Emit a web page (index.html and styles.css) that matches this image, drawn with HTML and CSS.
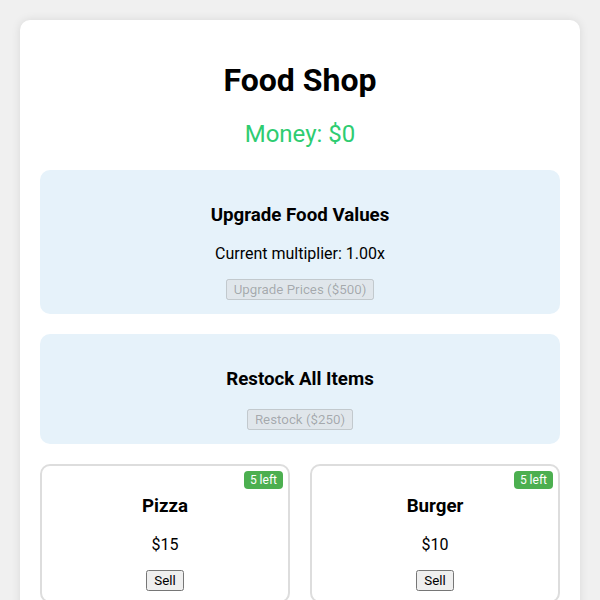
FILE: index.html
```html
<!DOCTYPE html>
<html lang="en">
<head>
  <meta charset="UTF-8">
  <meta name="viewport" content="width=device-width, initial-scale=1">
  <title>Food Shop</title>
  <link rel="stylesheet" href="styles.css">
</head>
<body>
  <div class="container">
    <h1>Food Shop</h1>
    <div class="money" id="money">Money: $0</div>

    <div class="panel">
      <h3>Upgrade Food Values</h3>
      <p>Current multiplier: <span id="multiplier">1.00</span>x</p>
      <button disabled>Upgrade Prices ($500)</button>
    </div>

    <div class="panel">
      <h3>Restock All Items</h3>
      <button disabled>Restock ($250)</button>
    </div>

    <div class="items">
      <div class="item">
        <span class="stock">5 left</span>
        <h3>Pizza</h3>
        <p>$15</p>
        <button>Sell</button>
      </div>
      <div class="item">
        <span class="stock">5 left</span>
        <h3>Burger</h3>
        <p>$10</p>
        <button>Sell</button>
      </div>
    </div>
  </div>
</body>
</html>
```

FILE: styles.css
```css
body {
  font-family: Roboto, "Liberation Sans", sans-serif;
  background: #f0f0f0;
  margin: 0;
  padding: 20px;
}
.container {
  background: #fff;
  border-radius: 10px;
  box-shadow: 0 0 10px rgba(0,0,0,0.1);
  padding: 20px;
  text-align: center;
}
h1 {
  font-size: 32px;
  margin: 21px 0;
}
.money {
  font-size: 24px;
  color: #2ecc71;
  margin: 21px 0 22px;
}
.panel {
  background: #e6f2fa;
  border-radius: 10px;
  padding: 15px 15px 14px;
  margin-bottom: 20px;
}
h3 {
  font-size: 18.72px;
  margin: 18.72px 0;
}
p {
  font-size: 16px;
  margin: 16px 0;
}
button {
  font-family: inherit;
  font-size: 13.33px;
}
.items {
  display: grid;
  grid-template-columns: 1fr 1fr;
  gap: 20px;
}
.item {
  position: relative;
  border: 2px solid #ddd;
  border-radius: 10px;
  padding: 10px;
}
.stock {
  position: absolute;
  top: 5px;
  right: 5px;
  background: #4caf50;
  color: #fff;
  font-size: 12px;
  padding: 2px 6px;
  border-radius: 4px;
}
```
